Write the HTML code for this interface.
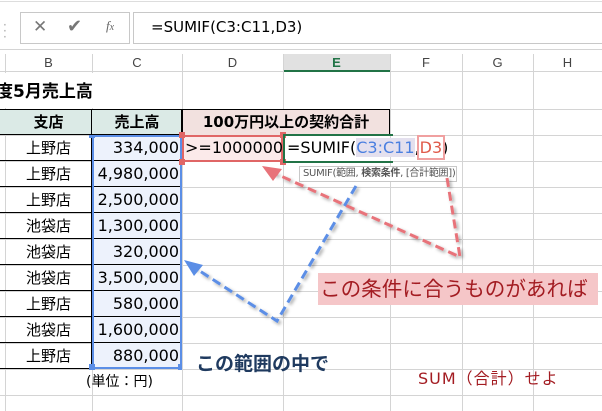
<!DOCTYPE html>
<html><head><meta charset="utf-8"><style>
*{margin:0;padding:0;box-sizing:border-box}
body{width:602px;height:411px;overflow:hidden;background:#fff;position:relative;font-family:"DejaVu Sans","Noto Sans CJK JP",sans-serif;color:#000}
.a{position:absolute}
.c{position:absolute;font-size:15px;line-height:26px;white-space:nowrap}
</style></head><body>
<div class="a" style="left:0;top:0;width:602px;height:50px;background:#fff;border-bottom:1px solid #d4d4d4"></div>
<div class="a" style="left:0;top:1px;width:602px;height:1px;background:#ddd"></div>
<div class="a" style="left:3px;top:22px;color:#aaa;font-size:12px;line-height:6px">·<br>·<br>·</div>
<div class="a" style="left:20px;top:12px;width:110px;height:32px;border:1px solid #c8c8c8"></div>
<div class="a" style="left:33px;top:17px;color:#777;font-size:17px">✕</div>
<div class="a" style="left:67px;top:16px;color:#777;font-size:18px">✔</div>
<div class="a" style="left:106px;top:18px;color:#666;font-size:13px;font-style:italic;font-family:'Liberation Serif',serif">f<span style="font-size:10px">x</span></div>
<div class="a" style="left:133px;top:12px;width:469px;height:32px;border:1px solid #c8c8c8;border-right:none"></div>
<div class="a" style="left:151px;top:18px;font-size:15px">=SUMIF(C3:C11,D3)</div>
<div class="a" style="left:0;top:54px;width:602px;height:18px;background:#fff;border-bottom:1px solid #d4d4d4"></div>
<div class="a" style="left:283px;top:54px;width:107px;height:18px;background:#e1e1e1;border-bottom:2px solid #217346"></div>
<div class="c" style="left:5px;top:54px;width:87px;text-align:center;line-height:18px;font-size:13px;color:#444;font-family:'Liberation Sans'">B</div>
<div class="c" style="left:92px;top:54px;width:90px;text-align:center;line-height:18px;font-size:13px;color:#444;font-family:'Liberation Sans'">C</div>
<div class="c" style="left:182px;top:54px;width:101px;text-align:center;line-height:18px;font-size:13px;color:#444;font-family:'Liberation Sans'">D</div>
<div class="c" style="left:283px;top:54px;width:107px;text-align:center;line-height:18px;font-size:13px;color:#217346;font-weight:bold;font-family:'Liberation Sans'">E</div>
<div class="c" style="left:390px;top:54px;width:72px;text-align:center;line-height:18px;font-size:13px;color:#444;font-family:'Liberation Sans'">F</div>
<div class="c" style="left:462px;top:54px;width:71px;text-align:center;line-height:18px;font-size:13px;color:#444;font-family:'Liberation Sans'">G</div>
<div class="c" style="left:533px;top:54px;width:69px;text-align:center;line-height:18px;font-size:13px;color:#444;font-family:'Liberation Sans'">H</div>
<svg class="a" style="left:0;top:54px" width="602" height="357">
<g stroke="#d4d4d4" stroke-width="1">
<line x1="5.5" y1="0" x2="5.5" y2="357"/><line x1="92.5" y1="0" x2="92.5" y2="357"/><line x1="182.5" y1="0" x2="182.5" y2="357"/><line x1="283.5" y1="0" x2="283.5" y2="357"/><line x1="390.5" y1="0" x2="390.5" y2="357"/><line x1="462.5" y1="0" x2="462.5" y2="357"/><line x1="533.5" y1="0" x2="533.5" y2="357"/>
<line x1="0" y1="55.5" x2="602" y2="55.5"/><line x1="0" y1="81.5" x2="602" y2="81.5"/><line x1="0" y1="107.5" x2="602" y2="107.5"/><line x1="0" y1="133.5" x2="602" y2="133.5"/><line x1="0" y1="159.5" x2="602" y2="159.5"/><line x1="0" y1="185.5" x2="602" y2="185.5"/><line x1="0" y1="211.5" x2="602" y2="211.5"/><line x1="0" y1="237.5" x2="602" y2="237.5"/><line x1="0" y1="263.5" x2="602" y2="263.5"/><line x1="0" y1="289.5" x2="602" y2="289.5"/><line x1="0" y1="315.5" x2="602" y2="315.5"/><line x1="0" y1="341.5" x2="602" y2="341.5"/>
</g></svg>
<div class="a" style="left:0;top:73px;width:182px;height:35px;background:#fff"></div>
<div class="c" style="left:-4px;top:79px;font-size:17px;font-weight:bold">度5月売上高</div>
<div class="a" style="left:0;top:109px;width:92px;height:26px;background:#dbeae6;border:1px solid #000;border-left:none"></div>
<div class="a" style="left:92px;top:109px;width:90px;height:26px;background:#dbeae6;border:1px solid #000;border-left:none"></div>
<div class="c" style="left:5px;top:109px;width:87px;text-align:center;font-weight:bold">支店</div>
<div class="c" style="left:92px;top:109px;width:90px;text-align:center;font-weight:bold">売上高</div>
<div class="a" style="left:182px;top:109px;width:208px;height:27px;background:#f2e1df;border:1px solid #000"></div>
<div class="c" style="left:182px;top:109px;width:208px;text-align:center;font-weight:bold">100万円以上の契約合計</div>
<div class="a" style="left:0;top:135px;width:92px;height:234px;border-right:1px solid #000"></div>
<div class="a" style="left:92px;top:135px;width:90px;height:234px;background:#edf2fc;border:2px solid #5b8ee6"></div>
<svg class="a" style="left:0;top:135px" width="182" height="235"><g stroke="#000"><line x1="0" y1="25.5" x2="92" y2="25.5"/><line x1="0" y1="51.5" x2="92" y2="51.5"/><line x1="0" y1="77.5" x2="92" y2="77.5"/><line x1="0" y1="103.5" x2="92" y2="103.5"/><line x1="0" y1="129.5" x2="92" y2="129.5"/><line x1="0" y1="155.5" x2="92" y2="155.5"/><line x1="0" y1="181.5" x2="92" y2="181.5"/><line x1="0" y1="207.5" x2="92" y2="207.5"/><line x1="0" y1="233.5" x2="92" y2="233.5"/>
<line x1="94" y1="25.5" x2="180" y2="25.5"/><line x1="94" y1="51.5" x2="180" y2="51.5"/><line x1="94" y1="77.5" x2="180" y2="77.5"/><line x1="94" y1="103.5" x2="180" y2="103.5"/><line x1="94" y1="129.5" x2="180" y2="129.5"/><line x1="94" y1="155.5" x2="180" y2="155.5"/><line x1="94" y1="181.5" x2="180" y2="181.5"/><line x1="94" y1="207.5" x2="180" y2="207.5"/></g>
<g fill="#5b8ee6"><rect x="89" y="-3" width="6" height="6"/><rect x="89" y="229" width="6" height="6"/><rect x="178" y="229" width="6" height="6"/></g></svg>
<div class="a" style="left:5px;top:135px;width:87px;text-align:center;font-size:15px;line-height:26px">上野店<br>上野店<br>上野店<br>池袋店<br>池袋店<br>池袋店<br>上野店<br>池袋店<br>上野店</div>
<div class="a" style="left:92px;top:135px;width:87px;text-align:right;font-size:16px;line-height:26px">334,000<br>4,980,000<br>2,500,000<br>1,300,000<br>320,000<br>3,500,000<br>580,000<br>1,600,000<br>880,000</div>
<div class="c" style="left:86px;top:369px;font-size:14px">(単位：円)</div>
<div class="a" style="left:182px;top:135px;width:101px;height:27px;background:#fbeaea;border:2px solid #e06666"></div>
<div class="a" style="left:179px;top:132px;width:6px;height:6px;background:#e06666"></div>
<div class="a" style="left:280px;top:132px;width:6px;height:6px;background:#e06666"></div>
<div class="a" style="left:179px;top:159px;width:6px;height:6px;background:#e06666"></div>
<div class="a" style="left:280px;top:159px;width:6px;height:6px;background:#e06666"></div>
<div class="c" style="left:185px;top:135px;font-size:16px">&gt;=1000000</div>
<div class="a" style="left:283px;top:134px;width:110px;height:29px;border:2px solid #217346"></div>
<div class="a" style="left:391px;top:136px;width:70px;height:25px;background:#fff"></div>
<div class="c" style="left:287px;top:135px;font-size:16px">=SUMIF(<span style="color:#4a7fe0;background:#e4e0ee">C3:C11</span>,<span style="color:#e05a4a;outline:2px solid #f0a0a0;outline-offset:1px">D3</span>)</div>
<div class="a" style="left:299px;top:166px;width:158px;height:16px;background:#fff;border:1px solid #c8c8c8;font-size:10px;letter-spacing:-0.3px;line-height:14px;color:#555;padding-left:3px;white-space:nowrap;overflow:hidden">SUMIF(範囲, <b>検索条件</b>, [合計範囲])</div>
<svg class="a" style="left:0;top:0" width="602" height="411">
<defs><filter id="s"><feDropShadow dx="2" dy="2" stdDeviation="1.5" flood-color="#000" flood-opacity="0.35"/></filter></defs>
<g filter="url(#s)" fill="none" stroke-width="3" stroke-dasharray="9 5">
<polyline points="447,178 460,257 272,172" stroke="#e8737a"/>
<polyline points="356,186 277,321 192,266" stroke="#5b8ee6"/>
</g>
<polygon points="262,166 282,169 273,181" fill="#e8737a"/>
<polygon points="184,260 203,265 194,276" fill="#5b8ee6"/>
</svg>
<div class="a" style="left:318px;top:273px;width:280px;height:32px;background:#f5c6c8"></div>
<div class="c" style="left:320px;top:276px;font-size:20.6px;color:#a31c22">この条件に合うものがあれば</div>
<div class="c" style="left:196px;top:351px;font-size:19px;font-weight:bold;color:#1f3a5f">この範囲の中で</div>
<div class="c" style="left:418px;top:366px;font-size:16px;letter-spacing:1px;color:#a31c22">SUM（合計）せよ</div>
</body></html>
